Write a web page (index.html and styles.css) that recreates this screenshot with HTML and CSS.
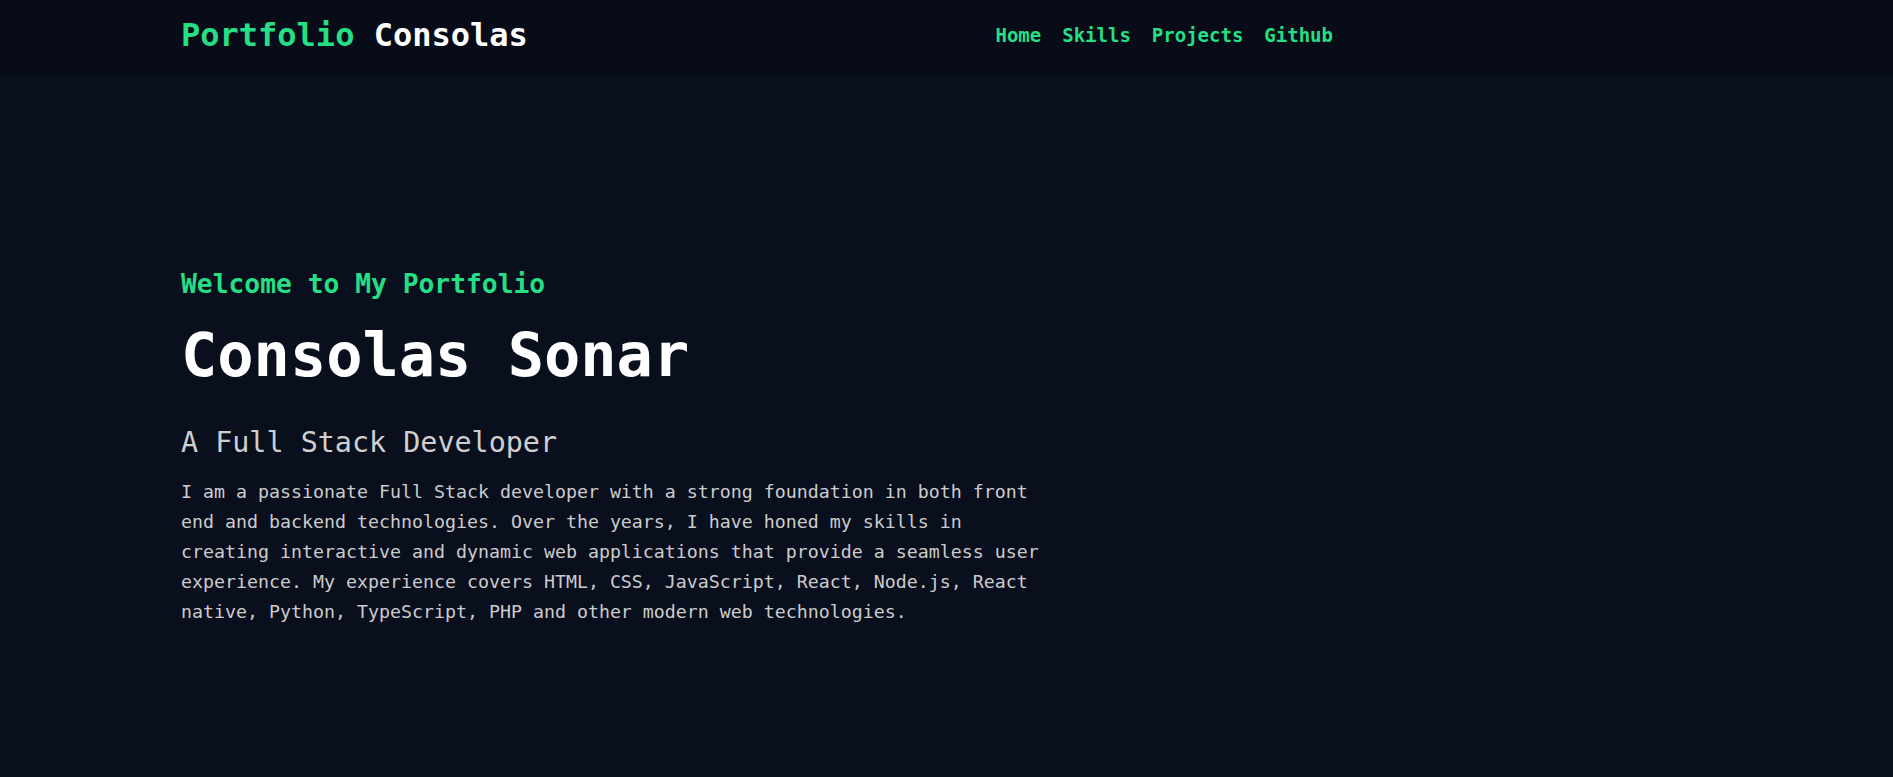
FILE: index.html
```html
<!DOCTYPE html>
<html lang="en">
<head>
<meta charset="utf-8">
<title>Portfolio Consolas</title>
<link rel="stylesheet" href="styles.css">
</head>
<body>
<header class="site-header">
  <div class="header-inner">
    <a class="logo" href="#"><span class="logo-green">Portfolio</span> <span class="logo-white">Consolas</span></a>
    <nav class="nav">
      <a href="#">Home</a>
      <a href="#">Skills</a>
      <a href="#">Projects</a>
      <a href="#">Github</a>
    </nav>
  </div>
</header>
<main class="hero">
  <div class="hero-inner">
    <h3 class="welcome">Welcome to My Portfolio</h3>
    <h1 class="name">Consolas Sonar</h1>
    <h2 class="role">A Full Stack Developer</h2>
    <p class="about">I am a passionate Full Stack developer with a strong foundation in both front end and backend technologies. Over the years, I have honed my skills in creating interactive and dynamic web applications that provide a seamless user experience. My experience covers HTML, CSS, JavaScript, React, Node.js, React native, Python, TypeScript, PHP and other modern web technologies.</p>
  </div>
</main>
</body>
</html>
```
FILE: styles.css
```css
* { box-sizing: border-box; }
html, body {
  margin: 0;
  padding: 0;
  height: 100%;
}
body {
  background: #0a0f1e;
  font-family: "DejaVu Sans Mono", "Liberation Mono", monospace;
  color: #cccccc;
  overflow: hidden;
}
.site-header {
  background: #070c18;
  height: 75px;
  padding-bottom: 4px;
  display: flex;
  align-items: center;
}
.header-inner {
  width: 1152px;
  margin-left: 181px;
  display: flex;
  align-items: center;
  justify-content: space-between;
}
.logo {
  text-decoration: none;
  font-size: 32px;
  font-weight: bold;
  line-height: 1.2;
}
.logo-green { color: #25df84; }
.logo-white { color: #ffffff; }
.nav {
  display: flex;
  gap: 21px;
}
.nav a {
  color: #25df84;
  text-decoration: none;
  font-size: 19px;
  font-weight: bold;
  line-height: 1.2;
}
.hero {
  padding: 193px 0 0 181px;
}
.hero-inner {
  display: flex;
  flex-direction: column;
  align-items: flex-start;
}
.welcome {
  margin: 0;
  color: #25df84;
  font-size: 26.3px;
  font-weight: bold;
  line-height: 32px;
}
.name {
  margin: 19px 0 0;
  color: #ffffff;
  font-size: 60.3px;
  font-weight: bold;
  line-height: 72px;
}
.role {
  margin: 34.5px 0 0;
  color: #cfcfcf;
  font-size: 28.4px;
  font-weight: normal;
  line-height: 34px;
}
.about {
  margin: 17px 0 0;
  max-width: 870px;
  color: #cccccc;
  font-size: 18.27px;
  line-height: 30px;
}
```
